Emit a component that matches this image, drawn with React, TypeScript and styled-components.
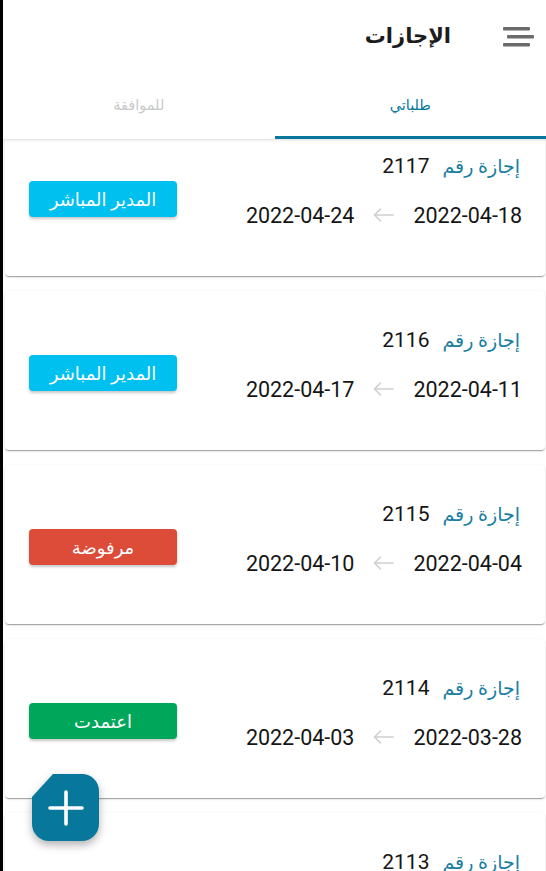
import React from "react";
import styled, { createGlobalStyle } from "styled-components";

const TEAL = "#07789c";

const GlobalStyle = createGlobalStyle`
  html, body {
    margin: 0;
    height: 100%;
    background: #000;
  }
  #root {
    height: 100%;
  }
`;

interface Leave {
  id: number;
  from: string;
  to: string;
  status: string;
  color: string;
}

const leaves: Leave[] = [
  { id: 2117, from: "2022-04-18", to: "2022-04-24", status: "المدير المباشر", color: "#00c0ef" },
  { id: 2116, from: "2022-04-11", to: "2022-04-17", status: "المدير المباشر", color: "#00c0ef" },
  { id: 2115, from: "2022-04-04", to: "2022-04-10", status: "مرفوضة", color: "#dd4b39" },
  { id: 2114, from: "2022-03-28", to: "2022-04-03", status: "اعتمدت", color: "#00a65a" },
  { id: 2113, from: "2022-03-21", to: "2022-03-27", status: "اعتمدت", color: "#00a65a" },
];

const App: React.FC = () => {
  return (
    <>
      <GlobalStyle />
      <Screen>
        <Header>
          <TopBar>
            <MenuButton aria-label="menu">
              <svg width={32} height={20} viewBox="0 0 32 20">
                <rect x={1} y={0} width={27} height={3.5} rx={1} fill="#6b6b6b" />
                <rect x={5} y={8} width={27} height={3.5} rx={1} fill="#6b6b6b" />
                <rect x={1} y={16} width={27} height={3.5} rx={1} fill="#6b6b6b" />
              </svg>
            </MenuButton>
            <Title>الإجازات</Title>
          </TopBar>
          <Tabs>
            <Tab $active>طلباتي</Tab>
            <Tab>للموافقة</Tab>
          </Tabs>
        </Header>

        <Viewport>
          <List>
            {leaves.map((l) => (
              <Card key={l.id}>
                <Info>
                  <TitleRow>
                    <Label>إجازة رقم</Label>
                    <Num>{l.id}</Num>
                  </TitleRow>
                  <DateRow>
                    <DateText>{l.from}</DateText>
                    <svg width={21} height={14} viewBox="0 0 21 14">
                      <path
                        d="M20 7H1.5M7.5 1L1.5 7l6 6"
                        fill="none"
                        stroke="#cfcfcf"
                        strokeWidth={1.6}
                        strokeLinecap="round"
                        strokeLinejoin="round"
                      />
                    </svg>
                    <DateText>{l.to}</DateText>
                  </DateRow>
                </Info>
                <Badge $color={l.color}>{l.status}</Badge>
              </Card>
            ))}
          </List>
        </Viewport>

        <Fab aria-label="add">
          <FabShape>
            <svg width={36} height={36} viewBox="0 0 36 36">
              <path d="M18 2v32M2 18h32" stroke="#fff" strokeWidth={3.6} strokeLinecap="round" />
            </svg>
          </FabShape>
        </Fab>
      </Screen>
    </>
  );
};

const Screen = styled.div`
  position: relative;
  height: 100vh;
  margin-left: 3px;
  background: #fff;
  display: flex;
  flex-direction: column;
  overflow: hidden;
  direction: rtl;
  font-family: Roboto, "Noto Sans", "DejaVu Sans", sans-serif;
`;

const Header = styled.header`
  position: relative;
  z-index: 2;
  background: #fff;
  box-shadow: 0 1px 3px rgba(0, 0, 0, 0.14);
`;

const TopBar = styled.div`
  height: 72px;
  display: flex;
  align-items: center;
  padding-right: 12px;
  gap: 51px;
`;

const MenuButton = styled.button`
  border: none;
  background: none;
  padding: 0;
  display: flex;
  margin-top: 2px;
`;

const Title = styled.h1`
  margin: 0;
  font-size: 21px;
  font-weight: 700;
  color: #1c1c1c;
`;

const Tabs = styled.nav`
  display: flex;
  height: 67px;
`;

const Tab = styled.div<{ $active?: boolean }>`
  flex: 1;
  display: flex;
  align-items: center;
  justify-content: center;
  font-size: 14.5px;
  color: ${(p) => (p.$active ? TEAL : "#c9c9c9")};
  box-shadow: ${(p) => (p.$active ? `inset 0 -3px 0 ${TEAL}` : "none")};
`;

const Viewport = styled.main`
  flex: 1;
  overflow: hidden;
`;

const List = styled.div`
  display: flex;
  flex-direction: column;
  gap: 15px;
  margin-top: -22px;
  padding: 0 1px 0 2px;
`;

const Card = styled.section`
  box-sizing: border-box;
  height: 159px;
  flex-shrink: 0;
  padding: 35px 23px 0 24px;
  display: flex;
  justify-content: space-between;
  align-items: flex-start;
  background: #fff;
  border-radius: 4px;
  box-shadow: 0 2px 1px -1px rgba(0, 0, 0, 0.2), 0 1px 1px 0 rgba(0, 0, 0, 0.14),
    0 1px 3px 0 rgba(0, 0, 0, 0.12);
`;

const Info = styled.div`
  display: flex;
  flex-direction: column;
`;

const TitleRow = styled.div`
  display: flex;
  align-items: center;
  gap: 13px;
  height: 28px;
  margin-right: 2px;
`;

const Label = styled.span`
  font-size: 19px;
  color: #1a7ea2;
`;

const Num = styled.span`
  font-size: 21px;
  color: #151515;
`;

const DateRow = styled.div`
  display: flex;
  align-items: center;
  gap: 19px;
  height: 28px;
  margin-top: 21px;
`;

const DateText = styled.span`
  direction: ltr;
  unicode-bidi: isolate;
  font-size: 21.5px;
  color: #151515;
`;

const Badge = styled.div<{ $color: string }>`
  margin-top: 29px;
  width: 148px;
  height: 36px;
  display: flex;
  align-items: center;
  justify-content: center;
  border-radius: 4px;
  background: ${(p) => p.$color};
  color: #fff;
  font-size: 18px;
  letter-spacing: 0.5px;
  box-shadow: 0 2px 3px rgba(0, 0, 0, 0.22);
`;

const Fab = styled.button`
  position: absolute;
  left: 29px;
  bottom: 30px;
  z-index: 3;
  border: none;
  background: none;
  padding: 0;
  filter: drop-shadow(0 4px 4px rgba(0, 0, 0, 0.3));
`;

const FabShape = styled.div`
  width: 67px;
  height: 67px;
  display: flex;
  align-items: center;
  justify-content: center;
  background: ${TEAL};
  clip-path: path("M21 0 H50 A17 17 0 0 1 67 17 V50 A17 17 0 0 1 50 67 H17 A17 17 0 0 1 0 50 V23 Z");
`;

export default App;
